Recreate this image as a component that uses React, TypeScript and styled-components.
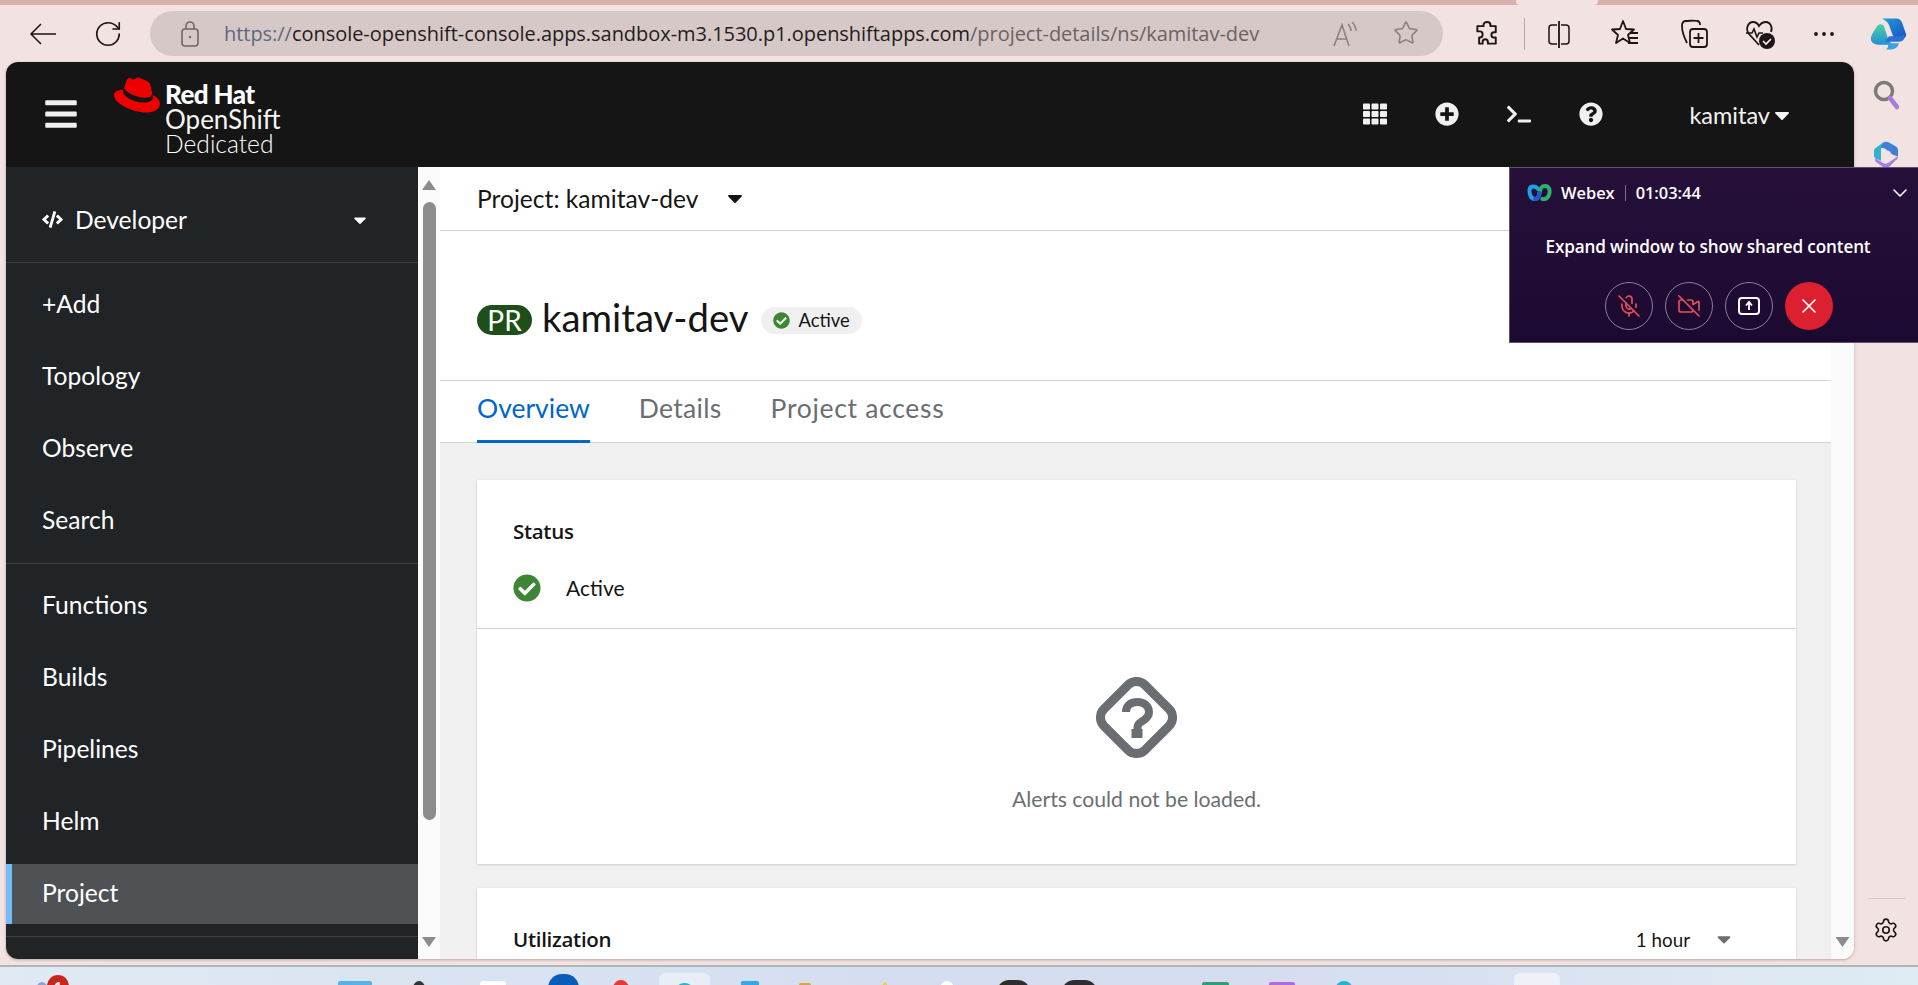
import React from 'react';
import styled, { createGlobalStyle } from 'styled-components';
import { RotateCw, Star, ChevronDown, MicOff, VideoOff, X, Settings } from 'lucide-react';
import { FaBars, FaTh, FaPlusCircle, FaTerminal, FaQuestionCircle, FaCode, FaCheckCircle, FaCaretDown } from 'react-icons/fa';
import { SiRedhat } from 'react-icons/si';

const GlobalStyle = createGlobalStyle`
  html, body { margin: 0; padding: 0; background: #f2e3e2; overflow: hidden; }
  * { box-sizing: border-box; }
`;

const Root = styled.div`
  position: relative;
  width: 1918px;
  height: 985px;
  overflow: hidden;
  display: flex;
  flex-direction: column;
  background: #f2e3e2;
  font-family: 'Lato', 'Open Sans', sans-serif;
`;

const TabStrip = styled.div`
  height: 5px;
  background: #d9b1ab;
  display: flex;
`;

const ActiveTabEdge = styled.div`
  margin-left: 1516px;
  width: 82px;
  background: #f2e3e2;
  border-radius: 0 0 4px 4px;
`;

const Toolbar = styled.div`
  height: 57px;
  display: flex;
  align-items: center;
  padding-left: 24px;
`;

const ToolIcon = styled.div<{ $ml?: number; $w?: number }>`
  width: ${({ $w }) => $w ?? 30}px;
  height: 34px;
  margin-left: ${({ $ml }) => $ml ?? 0}px;
  display: flex;
  align-items: center;
  justify-content: center;
  flex: none;
  color: #1c1416;

  svg {
    flex: none;
  }
`;

const ToolSep = styled.div`
  width: 1px;
  height: 32px;
  margin-left: 22px;
  background: #b5a9a8;
`;

const AddressBar = styled.div`
  width: 1293px;
  height: 45px;
  margin-left: 24px;
  border-radius: 23px;
  background: #d6c8c7;
  display: flex;
  align-items: center;
  padding: 0 24px 0 30px;
  flex: none;
`;

const Url = styled.div`
  margin-left: 24px;
  font-family: 'Open Sans', sans-serif;
  font-size: 20px;
  letter-spacing: -0.04px;
  color: #6a6362;
  white-space: nowrap;
`;

const UrlScheme = styled.span`
  color: #5b6a7c;
`;

const UrlHost = styled.span`
  color: #241c1c;
`;

const AddressTools = styled.div`
  margin-left: auto;
  display: flex;
  gap: 34px;
  color: #8b8281;
`;

const Middle = styled.div`
  height: 903px;
  display: flex;
  align-items: flex-start;
`;

const Page = styled.div`
  width: 1848px;
  height: 897px;
  margin-left: 6px;
  border-radius: 12px;
  overflow: hidden;
  display: flex;
  flex-direction: column;
  box-shadow: 0 1px 3px rgba(120, 80, 80, 0.45);
  background: #fff;
`;

const Masthead = styled.header`
  height: 105px;
  flex: none;
  background: #151515;
  color: #fff;
  display: flex;
  align-items: center;
  padding: 0 60px 0 37px;
`;

const Burger = styled.div`
  display: flex;
  color: #f0f0f0;
  margin-top: -2px;
`;

const Brand = styled.div`
  align-self: flex-start;
  display: flex;
  margin-left: 35px;
  padding-top: 10px;
`;

const BrandText = styled.div`
  margin-left: 5px;
  padding-top: 10px;
  font-family: 'Lato', sans-serif;
  font-size: 26px;
  line-height: 24px;
  color: #f4f4f4;
`;

const BrandTop = styled.div`
  font-weight: 900;
  font-size: 26px;
  line-height: 25px;
  letter-spacing: -0.6px;
  color: #fff;
`;

const BrandSmall = styled.div`
  font-size: 24.6px;
  line-height: 25px;
  font-weight: 300;
  color: #fff;
`;

const MastIcons = styled.div`
  margin-left: auto;
  display: flex;
  align-items: center;
  gap: 48px;
  color: #f0f0f0;
  margin-top: -1px;
`;

const MastIcon = styled.div`
  width: 24px;
  height: 24px;
  display: flex;
  align-items: center;
  justify-content: center;
`;

const UserMenu = styled.div`
  margin-left: 86px;
  display: flex;
  align-items: center;
  font-size: 23.5px;
  color: #f4f4f4;
`;

const Workspace = styled.div`
  flex: 1;
  min-height: 0;
  display: flex;
`;

const Sidebar = styled.nav`
  width: 412px;
  flex: none;
  background: #212427;
  color: #fff;
  overflow: hidden;
  font-size: 24.6px;
`;

const Perspective = styled.div`
  height: 96px;
  display: flex;
  align-items: center;
  padding: 10px 48px 0 36px;
  border-bottom: 1px solid #3c3f42;
  gap: 12px;
`;

const PerspectiveLabel = styled.span`
  flex: 1;
`;

const NavGroup = styled.div`
  padding: 12px 0;
  border-bottom: 1px solid #3c3f42;
  display: flex;
  flex-direction: column;
  gap: 12px;
`;

const NavItem = styled.div<{ $active?: boolean }>`
  height: 60px;
  display: flex;
  align-items: center;
  padding-left: ${({ $active }) => ($active ? 30 : 36)}px;
  padding-bottom: 3px;
  background: ${({ $active }) => ($active ? '#4f5255' : 'transparent')};
  border-left: ${({ $active }) => ($active ? '6px solid #73bcf7' : 'none')};
`;

const Scrollbar = styled.div<{ $w: number; $bg: string }>`
  width: ${({ $w }) => $w}px;
  flex: none;
  background: ${({ $bg }) => $bg};
  display: flex;
  flex-direction: column;
  align-items: center;
`;

const ScrollArrow = styled.div<{ $down?: boolean }>`
  width: 14px;
  height: 10px;
  flex: none;
  background: #8c8c8c;
  clip-path: ${({ $down }) =>
    $down ? 'polygon(0 0, 100% 0, 50% 100%)' : 'polygon(50% 0, 100% 100%, 0 100%)'};
  margin-top: ${({ $down }) => ($down ? 'auto' : '13px')};
  margin-bottom: ${({ $down }) => ($down ? '12px' : '0')};
`;

const ScrollThumb = styled.div`
  width: 13px;
  height: 618px;
  margin-top: 12px;
  flex: none;
  border-radius: 7px;
  background: #8c8c8c;
`;

const Content = styled.main`
  flex: 1;
  min-width: 0;
  display: flex;
  flex-direction: column;
  overflow: hidden;
  color: #151515;
  font-family: 'Lato', sans-serif;
`;

const ProjectBar = styled.div`
  height: 64px;
  flex: none;
  display: flex;
  align-items: center;
  padding-left: 37px;
  border-bottom: 1px solid #d2d2d2;
  font-size: 24.6px;
  padding-bottom: 1px;
`;

const ProjectCaret = styled.div`
  display: flex;
  margin-left: 25px;
`;

const Heading = styled.div`
  height: 149px;
  flex: none;
  display: flex;
  align-items: center;
  padding: 29px 0 0 37px;
`;

const Pr = styled.span`
  width: 55px;
  height: 30px;
  border-radius: 15px;
  background: #1e4f18;
  color: #fff;
  font-size: 28px;
  line-height: 30px;
  text-align: center;
`;

const ProjectName = styled.h1`
  margin: -7px 0 0 10px;
  font-size: 38.3px;
  font-weight: 400;
`;

const StatusPill = styled.span`
  margin-left: 12px;
  height: 27px;
  border-radius: 14px;
  background: #f0f0f0;
  display: flex;
  align-items: center;
  padding: 0 12px;
  gap: 9px;
  font-size: 18.4px;
`;

const Tabs = styled.div`
  height: 63px;
  flex: none;
  display: flex;
  gap: 49px;
  padding-left: 37px;
  border-top: 1px solid #d2d2d2;
  border-bottom: 1px solid #d2d2d2;
  background: #fff;
`;

const Tab = styled.div<{ $active?: boolean; $track?: number }>`
  display: flex;
  align-items: center;
  padding-bottom: 5px;
  font-size: 26.5px;
  letter-spacing: ${({ $track }) => $track ?? 0}px;
  color: ${({ $active }) => ($active ? '#0066cc' : '#6a6e73')};
  border-bottom: 3px solid ${({ $active }) => ($active ? '#0066cc' : 'transparent')};
  margin-bottom: -1px;
`;

const Dashboard = styled.div`
  flex: 1;
  min-height: 0;
  background: #f0f0f0;
  padding: 37px 35px 0 37px;
  display: flex;
  flex-direction: column;
  gap: 24px;
`;

const Card = styled.section<{ $grow?: boolean }>`
  background: #fff;
  flex: ${({ $grow }) => ($grow ? '1' : 'none')};
  box-shadow: 0 1px 2px rgba(3, 3, 3, 0.12), 0 0 2px rgba(3, 3, 3, 0.06);
`;

const CardHead = styled.div`
  padding: 39px 61px 0 36px;
  display: flex;
  align-items: center;
  justify-content: space-between;
`;

const CardTitle = styled.h2`
  margin: 0;
  font-size: 20.5px;
  line-height: 24px;
  font-weight: 600;
  font-family: 'Open Sans', sans-serif;
  letter-spacing: -0.3px;
`;

const StatusRow = styled.div`
  margin-top: 31px;
  height: 28px;
  padding-left: 36px;
  display: flex;
  align-items: center;
  gap: 25px;
  font-size: 21px;
`;

const StatusLabel = styled.span`
  margin-top: -2px;
`;

const CardDivider = styled.div`
  height: 1px;
  margin-top: 26px;
  background: #d2d2d2;
`;

const AlertsEmpty = styled.div`
  height: 235px;
  padding-top: 48px;
  display: flex;
  flex-direction: column;
  align-items: center;
`;

const AlertsText = styled.div`
  margin-top: 27px;
  font-size: 21.2px;
  line-height: 28px;
  color: #6a6e73;
`;

const RangeSelect = styled.div`
  display: flex;
  align-items: center;
  gap: 23px;
  font-size: 18.8px;
  color: #151515;
`;

const RangeCaret = styled.div`
  display: flex;
  color: #6a6e73;
`;

const SideRail = styled.aside`
  flex: 1;
  height: 903px;
  display: flex;
  flex-direction: column;
  align-items: center;
  padding: 18px 0 22px;
`;

const RailSecond = styled.div`
  margin-top: 29px;
  display: flex;
`;

const RailLine = styled.div`
  width: 37px;
  height: 1px;
  margin-top: auto;
  margin-bottom: 18px;
  background: #d9c8c7;
`;

const Taskbar = styled.footer`
  height: 20px;
  border-top: 2px solid #b0b4bd;
  background: linear-gradient(90deg, #dfeaf4 0%, #d4deef 45%, #d6dcef 65%, #dfecf4 100%);
  display: flex;
  align-items: flex-start;
  overflow: hidden;
`;

const TaskIcon = styled.div<{ $ml: number; $w: number; $top: number; $bg: string; $radius?: string }>`
  flex: none;
  width: ${({ $w }) => $w}px;
  height: 30px;
  margin-left: ${({ $ml }) => $ml}px;
  margin-top: ${({ $top }) => $top}px;
  background: ${({ $bg }) => $bg};
  border-radius: ${({ $radius }) => $radius ?? '4px'};
`;

const TaskChip = styled(TaskIcon)`
  display: flex;
  justify-content: center;
  padding-top: 10px;
`;

const ChipDot = styled.div`
  width: 21px;
  height: 21px;
  border-radius: 50%;
  background: #1fb5d4;
`;

const BadgedIcon = styled(TaskIcon)`
  position: relative;
`;

const Badge = styled.div`
  position: absolute;
  top: -7px;
  left: 13px;
  width: 22px;
  height: 22px;
  border-radius: 50%;
  background: #c8261c;
  color: #fff;
  font: 700 13px/22px 'Open Sans', sans-serif;
  text-align: center;
`;

const TaskText = styled.div<{ $ml: number }>`
  flex: none;
  margin-left: ${({ $ml }) => $ml}px;
  margin-top: 13px;
  font: 400 15px/20px 'Open Sans', sans-serif;
  color: #1a1a1a;
`;

const Webex = styled.div`
  position: absolute;
  left: 1509px;
  top: 167px;
  width: 409px;
  height: 176px;
  background: linear-gradient(180deg, #26103a 0%, #1c0930 100%);
  border: 1px solid #5d5070;
  border-right: none;
  color: #fff;
  font-family: 'Open Sans', sans-serif;
  display: flex;
  flex-direction: column;
`;

const WebexTop = styled.div`
  display: flex;
  align-items: center;
  padding: 12px 6px 0 17px;
  font-size: 16.4px;
  font-weight: 600;
  height: 37px;
`;

const WebexName = styled.span`
  margin-left: 9px;
`;

const WebexSep = styled.span`
  width: 1px;
  height: 16px;
  margin: 0 10px;
  background: #7c7089;
`;

const WebexClose = styled.div`
  margin-left: auto;
  display: flex;
`;

const WebexMessage = styled.div`
  margin-top: 30px;
  text-align: center;
  font-size: 17.15px;
  font-weight: 600;
  line-height: 24px;
  padding-right: 12px;
  letter-spacing: -0.15px;
`;

const WebexButtons = styled.div`
  margin-top: 23px;
  display: flex;
  justify-content: center;
  gap: 12px;
  padding-left: 10px;
`;

const CallButton = styled.div<{ $end?: boolean; $color?: string }>`
  width: 48px;
  height: 48px;
  border-radius: 50%;
  display: flex;
  align-items: center;
  justify-content: center;
  border: ${({ $end }) => ($end ? 'none' : '1.5px solid #8b8096')};
  background: ${({ $end }) => ($end ? '#dc2030' : 'transparent')};
  color: ${({ $color }) => $color ?? '#fff'};
`;

const navTop = ['+Add', 'Topology', 'Observe', 'Search'];
const navBottom = ['Functions', 'Builds', 'Pipelines', 'Helm'];

const taskItems = [
  { ml: 288, w: 34, top: 14, bg: '#52b4ec', radius: '2px' },
  { ml: 39, w: 16, top: 14, bg: '#333333', radius: '50%' },
  { ml: 53, w: 26, top: 14, bg: '#ffffff', radius: '3px' },
  { ml: 42, w: 31, top: 7, bg: '#0a5cba', radius: '14px 14px 0 0' },
  { ml: 32, w: 20, top: 13, bg: '#e53935', radius: '50%' },
];
const taskItems2 = [
  { ml: 31, w: 18, top: 14, bg: '#2fa8ee', radius: '2px' },
  { ml: 40, w: 12, top: 16, bg: '#d9a63c', radius: '2px' },
  { ml: 70, w: 8, top: 15, bg: '#f2d13a', radius: '50%' },
  { ml: 49, w: 18, top: 14, bg: '#ffffff', radius: '50%' },
  { ml: 41, w: 33, top: 13, bg: '#2e2e2e', radius: '12px 12px 0 0' },
  { ml: 32, w: 35, top: 13, bg: '#2e2e2e', radius: '12px 12px 0 0' },
  { ml: 105, w: 27, top: 15, bg: '#2f9e75', radius: '2px' },
  { ml: 40, w: 26, top: 15, bg: '#b06ae0', radius: '2px' },
  { ml: 38, w: 22, top: 14, bg: '#1fb5d4', radius: '50%' },
];

const BackIcon = () => (
  <svg width="27" height="22" viewBox="0 0 27 22" fill="none" stroke="#1c1416" strokeWidth="1.5">
    <path d="M27 11H2M12 1 2 11l10 10" />
  </svg>
);

const LockIcon = () => (
  <svg width="20" height="28" viewBox="0 0 20 28" fill="none" stroke="#6f6766" strokeWidth="1.6">
    <rect x="2" y="9" width="16" height="17" rx="3" />
    <path d="M6 9V6a4 4 0 0 1 8 0v3" />
    <circle cx="10" cy="17" r="1.2" fill="#6f6766" stroke="none" />
  </svg>
);

const ReadAloudIcon = () => (
  <svg width="28" height="28" viewBox="0 0 28 28" fill="none" stroke="#8b8281" strokeWidth="1.6">
    <path d="M3 26 11 5l7 21M6 19h10" />
    <path d="M17 4c2 2 3 4 3 7M21 2c3 3 4 6 4 9" />
  </svg>
);

const PuzzleIcon = () => (
  <svg width="24" height="28" viewBox="0 0 26 32" fill="none" stroke="#1c1416" strokeWidth="2.2">
    <path d="M9 6c0-5 8-5 8 0v1h6v7h-2c-4 0-4 6 0 6h2v7H14v-2c0-4-6-4-6 0v2H4v-7h1c4 0 4-7 0-7H2V7h7z" strokeLinejoin="round" />
  </svg>
);

const SplitIcon = () => (
  <svg width="26" height="32" viewBox="0 0 26 32" fill="none" stroke="#1c1416" strokeWidth="1.5">
    <path d="M11 7H6a3 3 0 0 0-3 3v13a3 3 0 0 0 3 3h5M15 7h5a3 3 0 0 1 3 3v13a3 3 0 0 1-3 3h-5" />
    <path d="M13 3v27" strokeWidth="1.8" />
  </svg>
);

const FavoritesIcon = () => (
  <svg width="30" height="32" viewBox="0 0 30 32" fill="none" stroke="#1c1416" strokeWidth="1.8" strokeLinejoin="round">
    <path d="M12 3l3 8 8 .5-6 5.500 2 8-7-4.500-7 4.500 2-8-6-5.500 8-.5z" />
    <path d="M19 15h8M18 20h9M17 25h10" />
  </svg>
);

const CollectionsIcon = () => (
  <svg width="30" height="34" viewBox="0 0 30 34" fill="none" stroke="#1c1416" strokeWidth="1.8">
    <path d="M8 26C5 20 3 13 3 9c0-3 1-5 4-5 4 0 8-1 11 0 2 0 3 2 3 4" />
    <rect x="11" y="12" width="17" height="18" rx="3" />
    <path d="M19.500 16v10M14.500 21h10" />
  </svg>
);

const HeartIcon = () => (
  <svg width="30" height="34" viewBox="0 0 30 34" fill="none">
    <path d="M14 28 4 17C0 12 3 5 8 5c3 0 5 2 6 4 2-3 5-4 7-4 4 0 7 5 5 10" stroke="#1c1416" strokeWidth="1.8" />
    <path d="M1 16h6l2-4 3 8 2-4h4" stroke="#1c1416" strokeWidth="1.6" />
    <circle cx="22" cy="24" r="8" fill="#1c1416" />
    <path d="m18 24 3 3 5-5" stroke="#fff" strokeWidth="1.6" />
  </svg>
);

const DotsIcon = () => (
  <svg width="22" height="6" viewBox="0 0 22 6" fill="#1c1416">
    <circle cx="3" cy="3" r="1.900" />
    <circle cx="11" cy="3" r="1.900" />
    <circle cx="19" cy="3" r="1.900" />
  </svg>
);

const CopilotIcon = () => (
  <svg width="36" height="34" viewBox="0 0 36 44" preserveAspectRatio="none">
    <defs>
      <linearGradient id="cpA" x1="0" y1="0" x2="1" y2="1">
        <stop offset="0" stopColor="#1f9fd8" />
        <stop offset="1" stopColor="#1b4fbf" />
      </linearGradient>
      <linearGradient id="cpB" x1="0" y1="0" x2="0" y2="1">
        <stop offset="0" stopColor="#4fd1a5" />
        <stop offset="1" stopColor="#1f8fd8" />
      </linearGradient>
    </defs>
    <path d="M12 2h14c3 0 5 2 6 5l4 15c1 4-2 6-6 6h-6l-4-14C19 9 17 5 12 2z" fill="url(#cpA)" />
    <path d="M7 12c2-4 6-3 7 0l3 12c1 4 2 8 6 12H10c-4 0-8-2-9-6-1-5 3-12 6-18z" fill="url(#cpB)" />
    <path d="M15 32h14c4 0 5-3 6-6l-1-4c-1 2-3 3-6 3h-9l-4 7z" fill="#2d6fd6" />
    <path d="M17 34h12c-1 5-4 8-8 8h-5c2-2 3-5 1-8z" fill="#3aa0e8" />
  </svg>
);

const LensIcon = () => (
  <svg width="26" height="32" viewBox="0 0 26 32" fill="none">
    <circle cx="11" cy="11" r="8.500" stroke="#7d7a7a" strokeWidth="3.500" />
    <path d="m17 18 7 9" stroke="#a77bd8" strokeWidth="4.500" strokeLinecap="round" />
  </svg>
);

const M365Icon = () => (
  <svg width="26" height="28" viewBox="0 0 26 28" fill="none">
    <path d="M10 1.500c2-1 4-1 6 0l7 4c1.500 1 2 2 2 4v6l-10-3.500C14 8 12 7 8 7l-3 1z" fill="#3f7fd6" />
    <path d="M1 10c0-2 1-3 3-4l6-4.500C8 4 8 6 8 8v12l-6-3c-1-1-1-2-1-3z" fill="#2fb2cf" />
    <path d="M2 17l8 5c2 1 3 1 5 0l10-7c0 2 0 3-2 4l-7 7c-2 1.500-4 1.500-6 0l-7-5c-1-1-1-2-1-4z" fill="#a97de0" />
    <circle cx="14" cy="14" r="4.500" fill="#f2e3e2" />
  </svg>
);

const WebexLogo = () => (
  <svg width="25" height="17" viewBox="0 0 25 17" fill="none" strokeWidth="4" strokeLinecap="round">
    <path d="M11 5C9 2 3 1 2.500 6 2 12 5 15 8 15c3 0 4-3 4.500-6" stroke="#1ba6e0" />
    <path d="M12.500 9C13 5 15 2 18 2c4 0 5 4 4.500 7-.5 4-4 7-7 6" stroke="#29b36b" />
    <path d="M8 15c3 0 4-3 4.500-6" stroke="#2457d6" />
  </svg>
);

const ShareIcon = () => (
  <svg width="22" height="18" viewBox="0 0 22 18" fill="none" stroke="#fff" strokeWidth="2">
    <rect x="1" y="1" width="20" height="16" rx="3" />
    <path d="M11 13V6M8 8.500 11 5l3 3.500" strokeWidth="1.800" />
  </svg>
);

const UnknownIcon = () => (
  <svg width="81" height="81" viewBox="0 0 81 81" fill="none">
    <rect x="11.500" y="11.500" width="58" height="58" rx="12" transform="rotate(45 40.500 40.500)" stroke="#6a6e73" strokeWidth="9" />
    <path d="M30 35c0-7 5-10 11.500-10S53 29 53 35c0 6-5 8-8 10-3 2-3.500 3-3.500 7" stroke="#6a6e73" strokeWidth="8" />
    <rect x="35.500" y="52" width="11" height="9" fill="#6a6e73" />
  </svg>
);

const App: React.FC = () => {
  return (
    <Root>
      <GlobalStyle />
      <TabStrip>
        <ActiveTabEdge />
      </TabStrip>
      <Toolbar>
        <ToolIcon $w={36}><BackIcon /></ToolIcon>
        <ToolIcon $w={36} $ml={30}><RotateCw size={30} strokeWidth={1.3} /></ToolIcon>
        <AddressBar>
          <LockIcon />
          <Url>
            <UrlScheme>https://</UrlScheme>
            <UrlHost>console-openshift-console.apps.sandbox-m3.1530.p1.openshiftapps.com</UrlHost>
            /project-details/ns/kamitav-dev
          </Url>
          <AddressTools>
            <ReadAloudIcon />
            <Star size={26} strokeWidth={1.5} />
          </AddressTools>
        </AddressBar>
        <ToolIcon $ml={29}><PuzzleIcon /></ToolIcon>
        <ToolSep />
        <ToolIcon $ml={19}><SplitIcon /></ToolIcon>
        <ToolIcon $ml={37}><FavoritesIcon /></ToolIcon>
        <ToolIcon $ml={38}><CollectionsIcon /></ToolIcon>
        <ToolIcon $ml={36}><HeartIcon /></ToolIcon>
        <ToolIcon $ml={34}><DotsIcon /></ToolIcon>
        <ToolIcon $ml={31} $w={36}><CopilotIcon /></ToolIcon>
      </Toolbar>
      <Middle>
        <Page>
          <Masthead>
            <Burger><FaBars size={36} /></Burger>
            <Brand>
              <SiRedhat size={46} color="#ee0000" />
              <BrandText>
                <BrandTop>Red Hat</BrandTop>
                <div>OpenShift</div>
                <BrandSmall>Dedicated</BrandSmall>
              </BrandText>
            </Brand>
            <MastIcons>
              <MastIcon><FaTh size={24} /></MastIcon>
              <MastIcon><FaPlusCircle size={24} /></MastIcon>
              <MastIcon><FaTerminal size={24} /></MastIcon>
              <MastIcon><FaQuestionCircle size={24} /></MastIcon>
            </MastIcons>
            <UserMenu>kamitav<FaCaretDown size={24} /></UserMenu>
          </Masthead>
          <Workspace>
            <Sidebar>
              <Perspective>
                <FaCode size={21} />
                <PerspectiveLabel>Developer</PerspectiveLabel>
                <FaCaretDown size={20} />
              </Perspective>
              <NavGroup>
                {navTop.map((n) => <NavItem key={n}>{n}</NavItem>)}
              </NavGroup>
              <NavGroup>
                {navBottom.map((n) => <NavItem key={n}>{n}</NavItem>)}
                <NavItem $active>Project</NavItem>
              </NavGroup>
            </Sidebar>
            <Scrollbar $w={22} $bg="#fbfbfb">
              <ScrollArrow />
              <ScrollThumb />
              <ScrollArrow $down />
            </Scrollbar>
            <Content>
              <ProjectBar>
                Project: kamitav-dev
                <ProjectCaret><FaCaretDown size={24} /></ProjectCaret>
              </ProjectBar>
              <Heading>
                <Pr>PR</Pr>
                <ProjectName>kamitav-dev</ProjectName>
                <StatusPill>
                  <FaCheckCircle size={17} color="#3e8635" />
                  Active
                </StatusPill>
              </Heading>
              <Tabs>
                <Tab $active>Overview</Tab>
                <Tab $track={0.3}>Details</Tab>
                <Tab $track={0.7}>Project access</Tab>
              </Tabs>
              <Dashboard>
                <Card>
                  <CardHead><CardTitle>Status</CardTitle></CardHead>
                  <StatusRow>
                    <FaCheckCircle size={28} color="#3e8635" />
                    <StatusLabel>Active</StatusLabel>
                  </StatusRow>
                  <CardDivider />
                  <AlertsEmpty>
                    <UnknownIcon />
                    <AlertsText>Alerts could not be loaded.</AlertsText>
                  </AlertsEmpty>
                </Card>
                <Card $grow>
                  <CardHead>
                    <CardTitle>Utilization</CardTitle>
                    <RangeSelect>
                      1 hour
                      <RangeCaret><FaCaretDown size={22} /></RangeCaret>
                    </RangeSelect>
                  </CardHead>
                </Card>
              </Dashboard>
            </Content>
            <Scrollbar $w={23} $bg="#fafafa">
              <ScrollArrow $down />
            </Scrollbar>
          </Workspace>
        </Page>
        <SideRail>
          <LensIcon />
          <RailSecond><M365Icon /></RailSecond>
          <RailLine />
          <Settings size={26} strokeWidth={1.5} color="#1c1416" />
        </SideRail>
      </Middle>
      <Taskbar>
        <BadgedIcon $ml={34} $w={16} $top={15} $bg="#8aa3dc" $radius="50%">
          <Badge>1</Badge>
        </BadgedIcon>
        {taskItems.map((t, i) => (
          <TaskIcon key={i} $ml={t.ml} $w={t.w} $top={t.top} $bg={t.bg} $radius={t.radius} />
        ))}
        <TaskChip $ml={28} $w={51} $top={6} $bg="#e9eef6" $radius="6px">
          <ChipDot />
        </TaskChip>
        {taskItems2.map((t, i) => (
          <TaskIcon key={i} $ml={t.ml} $w={t.w} $top={t.top} $bg={t.bg} $radius={t.radius} />
        ))}
        <TaskChip $ml={159} $w={46} $top={6} $bg="#eef2f8" $radius="6px" />
        <TaskText $ml={18}>ENG</TaskText>
        <TaskText $ml={200}>00:21</TaskText>
      </Taskbar>
      <Webex>
        <WebexTop>
          <WebexLogo />
          <WebexName>Webex</WebexName>
          <WebexSep />
          01:03:44
          <WebexClose><ChevronDown size={24} strokeWidth={1.6} /></WebexClose>
        </WebexTop>
        <WebexMessage>Expand window to show shared content</WebexMessage>
        <WebexButtons>
          <CallButton $color="#e0505c"><MicOff size={24} strokeWidth={1.7} /></CallButton>
          <CallButton $color="#e0505c"><VideoOff size={24} strokeWidth={1.7} /></CallButton>
          <CallButton><ShareIcon /></CallButton>
          <CallButton $end><X size={24} strokeWidth={1.7} /></CallButton>
        </WebexButtons>
      </Webex>
    </Root>
  );
};

export default App;
